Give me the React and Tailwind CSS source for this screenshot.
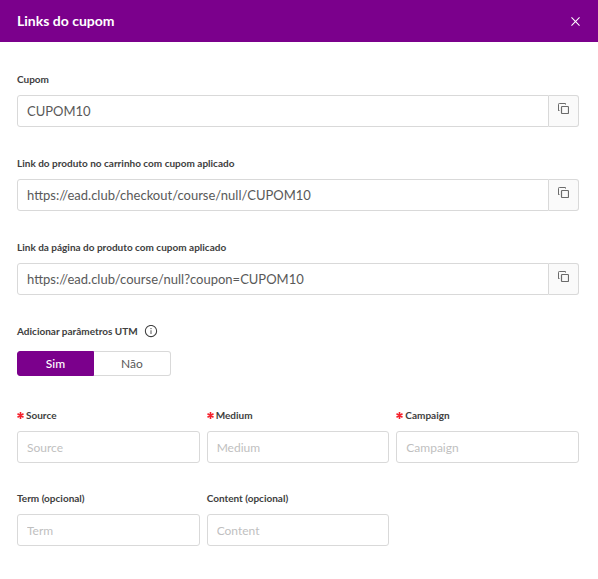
import { useState } from 'react';
import { AiOutlineClose, AiOutlineInfoCircle } from 'react-icons/ai';

const CopyIcon = () => (
  <svg viewBox="0 0 11 11" className="w-[11px] h-[11px]" fill="none" stroke="currentColor" aria-hidden="true">
    <path d="M0.5 7.5H1.5M0.5 7.8V1.3Q0.5 0.5 1.3 0.5H7.5V1.6" />
    <rect x="3.5" y="3.5" width="7" height="7" rx="0.8" strokeWidth="1.2" />
  </svg>
);

const CopyField = ({ id, label, value }) => {
  const handleCopy = () => {
    navigator.clipboard?.writeText(value);
  };

  return (
    <div>
      <label htmlFor={id} className="block text-[10px] leading-4 font-bold text-[#404040]">
        {label}
      </label>
      <div className="mt-2 flex h-8">
        <input
          id={id}
          readOnly
          value={value}
          className="min-w-0 flex-1 rounded-l-[3px] border border-[#d9d9d9] bg-white px-[9px] pt-px text-[13px] text-[#595959] outline-none"
        />
        <button
          type="button"
          onClick={handleCopy}
          aria-label="Copiar"
          className="flex w-[30px] items-start justify-center rounded-r-[3px] border border-l-0 border-[#d9d9d9] bg-[#fafafa] pt-[7px] text-[#6b6b6b]"
        >
          <CopyIcon />
        </button>
      </div>
    </div>
  );
};

const TextField = ({ id, label, placeholder, required = false }) => (
  <div>
    <label htmlFor={id} className="flex items-center text-[10px] leading-4 font-bold text-[#404040]">
      {required && (
        <svg viewBox="0 0 7 7" className="mr-[2px] w-[7px] h-[7px] text-[#f5222d]" stroke="currentColor" strokeWidth="1.6" aria-hidden="true">
          <path d="M3.5 0V7M0.5 1.8L6.5 5.2M6.5 1.8L0.5 5.2" />
        </svg>
      )}
      {label}
    </label>
    <input
      id={id}
      required={required}
      placeholder={placeholder}
      className="mt-2 block h-8 w-full rounded-[3px] border border-[#d9d9d9] bg-white px-[9px] text-xs text-[#595959] outline-none placeholder:text-[#bfbfbf]"
    />
  </div>
);

const links = [
  { id: 'coupon', label: 'Cupom', value: 'CUPOM10' },
  {
    id: 'cart-link',
    label: 'Link do produto no carrinho com cupom aplicado',
    value: 'https://ead.club/checkout/course/null/CUPOM10',
  },
  {
    id: 'page-link',
    label: 'Link da página do produto com cupom aplicado',
    value: 'https://ead.club/course/null?coupon=CUPOM10',
  },
];

const utmFields = [
  { id: 'source', label: 'Source', placeholder: 'Source', required: true },
  { id: 'medium', label: 'Medium', placeholder: 'Medium', required: true },
  { id: 'campaign', label: 'Campaign', placeholder: 'Campaign', required: true },
  { id: 'term', label: 'Term (opcional)', placeholder: 'Term' },
  { id: 'content', label: 'Content (opcional)', placeholder: 'Content' },
];

const App = () => {
  const [useUtm, setUseUtm] = useState(true);

  return (
    <div className="min-h-screen bg-white font-['Lato',sans-serif]">
      <header className="flex h-[42px] items-center justify-between bg-[#7b008c] pl-[17px] pr-4">
        <h1 className="text-sm font-bold text-white">Links do cupom</h1>
        <button type="button" aria-label="Fechar" className="text-white">
          <AiOutlineClose className="w-[13px] h-[13px]" />
        </button>
      </header>

      <form className="pt-[29px] pb-8 pl-[17px] pr-[19px]">
        <div className="space-y-7">
          {links.map((link) => (
            <CopyField key={link.id} {...link} />
          ))}
        </div>

        <fieldset className="mt-7">
          <legend className="flex items-center gap-1.5 text-[10px] leading-4 font-bold text-[#404040]">
            Adicionar parâmetros UTM
            <AiOutlineInfoCircle className="w-[14px] h-[14px]" />
          </legend>
          <div className="mt-3 flex h-[25px] text-xs">
            <button
              type="button"
              aria-pressed={useUtm}
              onClick={() => setUseUtm(true)}
              className={`w-[77px] rounded-l-[3px] border ${useUtm ? 'border-[#7b008c] bg-[#7b008c] font-medium text-white' : 'border-[#d9d9d9] text-[#595959]'}`}
            >
              Sim
            </button>
            <button
              type="button"
              aria-pressed={!useUtm}
              onClick={() => setUseUtm(false)}
              className={`w-[77px] rounded-r-[3px] border border-l-0 ${useUtm ? 'border-[#d9d9d9] text-[#595959]' : 'border-[#7b008c] bg-[#7b008c] font-medium text-white'}`}
            >
              Não
            </button>
          </div>
        </fieldset>

        {useUtm && (
          <div className="mt-[31px] grid grid-cols-3 gap-x-[7px] gap-y-[27px]">
            {utmFields.map((field) => (
              <TextField key={field.id} {...field} />
            ))}
          </div>
        )}
      </form>
    </div>
  );
};

export default App;
